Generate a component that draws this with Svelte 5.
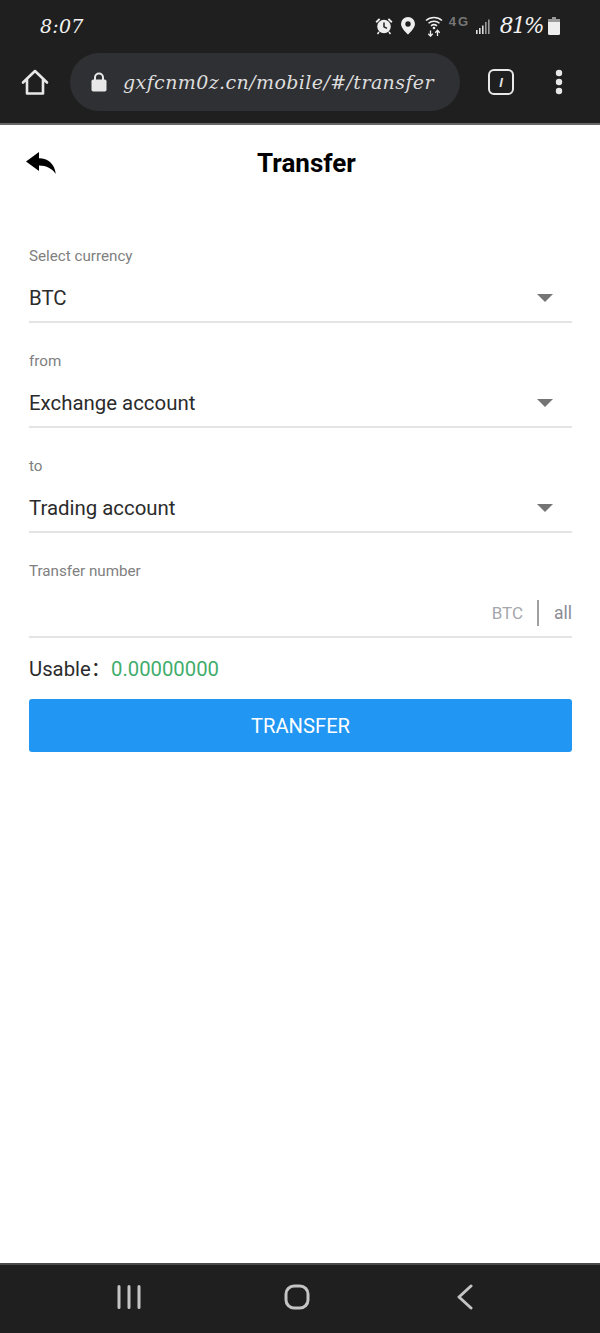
<script lang="ts">
  const selects = [
    { label: "Select currency", value: "BTC" },
    { label: "from", value: "Exchange account" },
    { label: "to", value: "Trading account" },
  ];
</script>

<div class="screen">
  <header class="chrome">
    <div class="status">
      <span class="time">8:07</span>
      <div class="status-icons">
        <!-- alarm -->
        <svg width="20" height="20" viewBox="0 0 20 20">
          <circle cx="10" cy="10.5" r="6.8" fill="#eee" />
          <path d="M10 6.5v4.3l3 1.6" fill="none" stroke="#1f1f1f" stroke-width="1.5" />
          <path d="M1.5 5.5 5 2.2 6.3 3.6 2.8 7ZM18.500 5.500 15 2.200 13.700 3.600 17.200 7Z" fill="#eee" />
          <path d="M5 16l-1.500 2M15 16l1.500 2" stroke="#eee" stroke-width="1.500" />
        </svg>
        <!-- location -->
        <svg class="pin" width="16" height="19" viewBox="0 0 16 19">
          <path fill-rule="evenodd" d="M8 1a7 7 0 0 0-7 7c0 4.500 7 10.500 7 10.500S15 12.500 15 8a7 7 0 0 0-7-7Zm0 4.300a2.700 2.700 0 1 1 0 5.400 2.700 2.700 0 0 1 0-5.400Z" fill="#eee" />
        </svg>
        <!-- wifi with arrows -->
        <svg class="wifi" width="18" height="22" viewBox="0 0 18 22">
          <path d="M1 5.500C5.500 1.500 12.500 1.500 17 5.500M3.500 8.200C6.500 5.600 11.500 5.600 14.500 8.200M6 10.800C7.800 9.400 10.200 9.400 12 10.800" fill="none" stroke="#eee" stroke-width="1.500" />
          <circle cx="9" cy="13" r="1.300" fill="#eee" />
          <path d="M5.500 15.500v5.500M3.300 18.800l2.200 2.400 2.200-2.400M12.500 21v-5.500M10.300 17.700l2.200-2.400 2.200 2.400" fill="none" stroke="#eee" stroke-width="1.300" />
        </svg>
        <span class="net">4G</span>
        <!-- signal -->
        <svg class="signal" width="16" height="17" viewBox="0 0 16 17">
          <g fill="#ddd">
            <rect x="0" y="13" width="1.600" height="4" />
            <rect x="3" y="11" width="1.600" height="6" />
            <rect x="6" y="8.500" width="1.600" height="8.500" />
          </g>
          <g fill="#999">
            <rect x="9" y="5" width="1.600" height="12" />
            <rect x="12" y="2.500" width="1.600" height="14.500" />
          </g>
        </svg>
        <span class="pct">81%</span>
        <!-- battery -->
        <svg class="battery" width="12" height="18" viewBox="0 0 12 18">
          <path d="M4 0h4v2H4Z" fill="#999" />
          <rect x="0" y="2" width="12" height="16" rx="1.500" fill="#eee" />
          <rect x="0" y="2" width="12" height="3" fill="#999" />
        </svg>
      </div>
    </div>

    <div class="toolbar">
      <svg class="home" width="28" height="28" viewBox="0 0 28 28">
        <path d="M2 14.500 14 3l12 11.500M6 11v14.500h16V11" fill="none" stroke="#e8e8e8" stroke-width="2.600" stroke-linejoin="round" stroke-linecap="round" />
      </svg>
      <div class="omnibox">
        <svg width="18" height="20" viewBox="0 0 18 20">
          <path d="M5 8V5.500a4 4 0 0 1 8 0V8" fill="none" stroke="#e8e8e8" stroke-width="2" />
          <rect x="1.500" y="7.500" width="15" height="12" rx="1.800" fill="#e8e8e8" />
        </svg>
        <span class="url">gxfcnm0z.cn/mobile/#/transfer</span>
      </div>
      <div class="tabs"><span>l</span></div>
      <svg class="menu" width="8" height="26" viewBox="0 0 8 26">
        <circle cx="4" cy="4" r="3.200" fill="#e8e8e8" />
        <circle cx="4" cy="13" r="3.200" fill="#e8e8e8" />
        <circle cx="4" cy="22" r="3.200" fill="#e8e8e8" />
      </svg>
    </div>
  </header>

  <main class="page">
    <div class="titlebar">
      <svg class="back" width="32" height="24" viewBox="0 0 32 24">
        <path d="M1 10.500 14 1v6.200c9 .3 15.500 5 16.800 15.800C27 17.500 21.500 14.800 14 14.600V20Z" fill="#000" />
      </svg>
      <h1>Transfer</h1>
    </div>

    <form class="form">
      {#each selects as s}
        <div class="field">
          <div class="label">{s.label}</div>
          <div class="control">
            <span>{s.value}</span>
            <i class="caret"></i>
          </div>
        </div>
      {/each}

      <div class="field">
        <div class="label">Transfer number</div>
        <div class="control amount">
          <span class="unit">BTC</span>
          <span class="all">all</span>
        </div>
      </div>

      <div class="usable">Usable：<span class="balance">0.00000000</span></div>
      <button type="button" class="submit">TRANSFER</button>
    </form>
  </main>

  <footer class="nav">
    <svg width="26" height="26" viewBox="0 0 26 26">
      <path d="M3 2.500v21M13 2.500v21M23 2.500v21" stroke="#c4c4c4" stroke-width="3" stroke-linecap="round" />
    </svg>
    <svg width="26" height="26" viewBox="0 0 26 26">
      <rect x="2" y="2" width="22" height="22" rx="8" fill="none" stroke="#c4c4c4" stroke-width="3" />
    </svg>
    <svg width="26" height="26" viewBox="0 0 26 26">
      <path d="M19 2 7 13l12 11" fill="none" stroke="#c4c4c4" stroke-width="3" stroke-linecap="round" stroke-linejoin="round" />
    </svg>
  </footer>
</div>

<style>
  :global(body) {
    margin: 0;
    background: #fff;
  }

  .screen {
    width: 600px;
    height: 1333px;
    display: flex;
    flex-direction: column;
    font-family: Roboto, "Liberation Sans", sans-serif;
    overflow: hidden;
  }

  .chrome {
    height: 123px;
    background: #1f1f1f;
    border-bottom: 2px solid #666;
    flex: none;
  }

  .status {
    height: 51px;
    display: flex;
    align-items: center;
    justify-content: space-between;
    padding: 0 40px 0 40px;
    color: #f2f2f2;
  }

  .time {
    font: italic 19px "DejaVu Serif", serif;
    letter-spacing: 0.2px;
  }

  .status-icons {
    display: flex;
    align-items: center;
    gap: 6px;
  }

  .wifi {
    margin-left: 3px;
  }

  .net {
    width: 21px;
    font: 700 13px "Liberation Sans", sans-serif;
    letter-spacing: 2px;
    color: #777;
    margin: -8px 0 0 0;
  }

  .pct {
    font: italic 21.500px "DejaVu Serif", serif;
    margin-left: 2px;
    letter-spacing: -1.500px;
  }

  .battery {
    margin-left: -1px;
  }

  .toolbar {
    height: 62px;
    display: flex;
    align-items: center;
    padding-left: 21px;
  }

  .omnibox {
    width: 390px;
    height: 58px;
    margin-left: 21px;
    padding-left: 20px;
    box-sizing: border-box;
    background: #2f3033;
    border-radius: 29px;
    display: flex;
    align-items: center;
    gap: 15px;
  }

  .url {
    font: italic 19px "DejaVu Serif", serif;
    color: #ddd;
    letter-spacing: 0.4px;
    white-space: nowrap;
  }

  .tabs {
    width: 22px;
    height: 22px;
    margin-left: 28px;
    border: 2.500px solid #e8e8e8;
    border-radius: 6px;
    display: flex;
    align-items: center;
    justify-content: center;
    font: italic 700 13px "Liberation Sans", sans-serif;
    color: #e8e8e8;
  }

  .menu {
    margin-left: 41px;
  }

  .page {
    flex: 1;
    background: #fff;
    padding: 0 28px 0 29px;
  }

  .titlebar {
    position: relative;
    height: 76px;
    display: flex;
    align-items: center;
    justify-content: center;
  }

  .back {
    position: absolute;
    left: -4px;
    top: 26px;
  }

  h1 {
    margin: 0 0 0 12px;
    font-size: 26px;
    font-weight: 700;
    color: #000;
  }

  .form {
    padding-top: 46px;
  }

  .field {
    height: 105px;
    box-sizing: border-box;
  }

  .label {
    font-size: 15.200px;
    line-height: 18px;
    color: #808080;
  }

  .control {
    height: 58px;
    box-sizing: border-box;
    border-bottom: 2px solid #e4e4e4;
    display: flex;
    align-items: center;
    justify-content: space-between;
    padding-top: 9px;
    font-size: 20.400px;
    color: #2b2b2b;
  }

  .caret {
    width: 0;
    height: 0;
    margin-right: 19px;
    border-left: 8px solid transparent;
    border-right: 8px solid transparent;
    border-top: 8px solid #757575;
  }

  .amount {
    justify-content: flex-end;
    font-size: 17px;
  }

  .unit {
    color: #a6a6ad;
    padding-right: 14px;
    line-height: 26px;
    border-right: 2px solid #a0a0a0;
  }

  .all {
    color: #8a8a94;
    font-size: 17.500px;
    padding-left: 15px;
    line-height: 26px;
  }

  .usable {
    font-family: Roboto, "Noto Sans CJK SC", sans-serif;
    font-size: 20.300px;
    line-height: 28px;
    color: #2b2b2b;
    margin-top: -12px;
  }

  .balance {
    color: #41ad6b;
  }

  .submit {
    display: block;
    width: 100%;
    height: 53px;
    margin-top: 16px;
    border: 0;
    border-radius: 3px;
    background: #2196f3;
    color: #fff;
    font: 20.200px Roboto, sans-serif;
  }

  .nav {
    height: 70px;
    flex: none;
    background: #1f1f1f;
    border-top: 2px solid #4a4a4a;
    box-sizing: border-box;
    display: flex;
    align-items: center;
    justify-content: space-between;
    padding: 0 122px 4px 116px;
  }
</style>
